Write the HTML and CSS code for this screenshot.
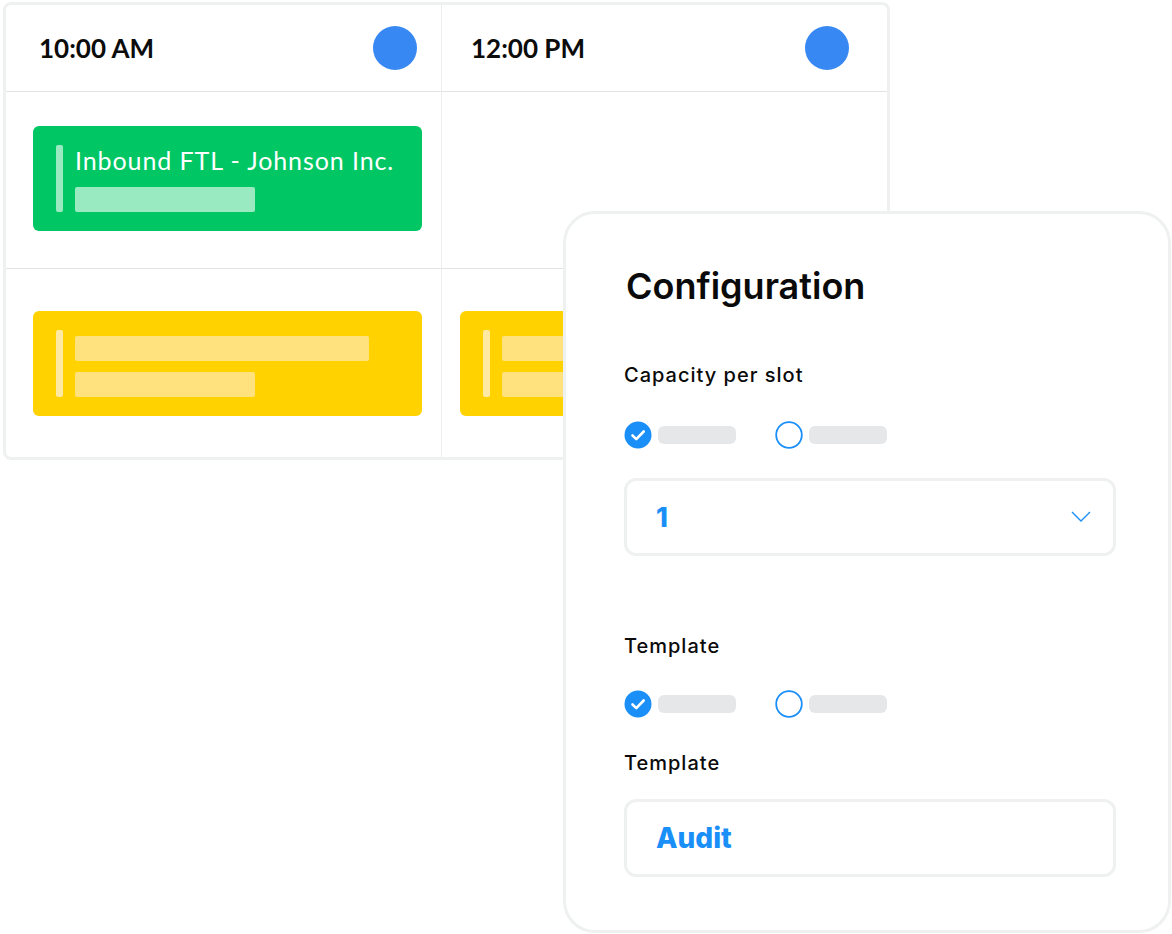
FILE: index.html
```html
<!DOCTYPE html>
<html>
<head>
<meta charset="utf-8">
<link rel="stylesheet" href="styles.css">
</head>
<body>
<div class="stage">
  <div class="calendar">
    <div class="col col-left">
      <div class="head"><span class="time">10:00 AM</span><span class="dot"></span></div>
      <div class="cell row1">
        <div class="event green">
          <div class="ev-line"></div>
          <div class="ev-body">
            <div class="ev-title">Inbound FTL - Johnson Inc.</div>
            <div class="bar short"></div>
          </div>
        </div>
      </div>
      <div class="cell row2">
        <div class="event yellow">
          <div class="ev-line"></div>
          <div class="ev-body">
            <div class="bar long"></div>
            <div class="bar short"></div>
          </div>
        </div>
      </div>
    </div>
    <div class="col col-right">
      <div class="head"><span class="time">12:00 PM</span><span class="dot"></span></div>
      <div class="cell row1"></div>
      <div class="cell row2">
        <div class="event yellow">
          <div class="ev-line"></div>
          <div class="ev-body">
            <div class="bar long"></div>
            <div class="bar short"></div>
          </div>
        </div>
      </div>
    </div>
  </div>

  <div class="config">
    <h1 class="title">Configuration</h1>
    <div class="label cap">Capacity per slot</div>
    <div class="radios r1">
      <div class="radio"><span class="check"><svg viewBox="0 0 28 28" width="28" height="28"><circle cx="14" cy="14" r="13.5" fill="#1a8ff7"/><path d="M8.5 14.5l3.8 3.6 7.4-7.6" fill="none" stroke="#fff" stroke-width="2.6" stroke-linecap="round" stroke-linejoin="round"/></svg></span><span class="pill"></span></div>
      <div class="radio"><span class="check"><svg viewBox="0 0 28 28" width="28" height="28"><circle cx="14" cy="14" r="12.8" fill="#fff" stroke="#1a8ff7" stroke-width="1.8"/></svg></span><span class="pill"></span></div>
    </div>
    <div class="field select">
      <span class="value">1</span>
      <svg class="chev" viewBox="0 0 20 12" width="20" height="12"><path d="M1 1l9 9 9-9" fill="none" stroke="#1a8ff7" stroke-width="1.4"/></svg>
    </div>
    <div class="label tpl1">Template</div>
    <div class="radios r2">
      <div class="radio"><span class="check"><svg viewBox="0 0 28 28" width="28" height="28"><circle cx="14" cy="14" r="13.5" fill="#1a8ff7"/><path d="M8.5 14.5l3.8 3.6 7.4-7.6" fill="none" stroke="#fff" stroke-width="2.6" stroke-linecap="round" stroke-linejoin="round"/></svg></span><span class="pill"></span></div>
      <div class="radio"><span class="check"><svg viewBox="0 0 28 28" width="28" height="28"><circle cx="14" cy="14" r="12.8" fill="#fff" stroke="#1a8ff7" stroke-width="1.8"/></svg></span><span class="pill"></span></div>
    </div>
    <div class="label tpl2">Template</div>
    <div class="field text">
      <span class="value audit">Audit</span>
    </div>
  </div>
</div>
</body>
</html>
```

FILE: styles.css
```css
* { box-sizing: border-box; }
html, body { margin: 0; padding: 0; background: #fff; }
body { font-family: "Lato", "Open Sans", sans-serif; width: 1172px; height: 934px; overflow: hidden; }
.stage { position: relative; width: 1172px; height: 934px; padding: 2px 0 0 3px; }

.calendar {
  width: 887px;
  height: 458px;
  border: 3px solid #eff1f1;
  border-radius: 8px;
  display: flex;
  overflow: hidden;
  background: #fff;
}
.col { display: flex; flex-direction: column; }
.col-left { width: 436px; border-right: 1px solid #eceeee; }
.col-right { flex: 1; }
.head {
  height: 87px;
  border-bottom: 1px solid #e2e3e3;
  display: flex;
  align-items: center;
  justify-content: space-between;
}
.col-left .head { padding: 0 24px 0 33px; }
.col-right .head { padding: 0 38px 0 29px; }
.time { font-size: 26px; font-weight: 700; color: #0c0c0c; }
.dot { width: 44px; height: 44px; border-radius: 50%; background: #3888f3; }

.cell { display: flex; align-items: flex-start; }
.row1 { height: 177px; border-bottom: 1px solid #e2e3e3; padding-top: 34px; }
.row2 { flex: 1; padding-top: 42px; }
.col-left .cell { padding-left: 27px; }
.col-right .cell { padding-left: 18px; }

.event {
  width: 389px;
  height: 105px;
  border-radius: 6px;
  display: flex;
  padding: 19px 0 0 23px;
  gap: 12px;
  flex-shrink: 0;
}
.green { background: #00c764; }
.yellow { background: #ffd200; }
.ev-line { width: 7px; height: 67px; border-radius: 2px; }
.green .ev-line { background: #9aeac1; }
.yellow .ev-line { background: #ffe9a3; }
.ev-body { display: flex; flex-direction: column; }
.ev-title { color: #fff; font-size: 25px; line-height: 30px; height: 42px; letter-spacing: 0.9px; white-space: nowrap; }
.bar { height: 25px; border-radius: 2px; }
.green .bar { background: #9aeac1; }
.yellow .bar { background: #ffe17d; }
.yellow .ev-body { padding-top: 6px; gap: 11px; }
.bar.long { width: 294px; }
.bar.short { width: 180px; }

.config {
  position: absolute;
  left: 563px;
  top: 211px;
  width: 608px;
  height: 722px;
  background: #fff;
  border: 3px solid #eff1f1;
  border-radius: 32px;
  padding: 50px 55px 0 58px;
  font-family: "Inter", "Open Sans", sans-serif;
}
.title { margin: 0 0 0 2px; font-size: 36px; font-weight: 600; color: #0a0a0a; line-height: 44px; }
.label { font-size: 20px; font-weight: 500; color: #0a0a0a; line-height: 24px; letter-spacing: 1px; }
.label.cap { margin-top: 55px; }
.radios { display: flex; gap: 39px; height: 28px; }
.radios.r1 { margin-top: 34px; }
.radios.r2 { margin-top: 32px; }
.radio { display: flex; align-items: center; gap: 6px; }
.check { width: 28px; height: 28px; display: block; }
.check svg { display: block; }
.pill { width: 78px; height: 18px; border-radius: 6px; background: #e6e7e9; }
.field {
  width: 492px;
  height: 78px;
  border: 3px solid #eff1f1;
  border-radius: 12px;
  display: flex;
  align-items: center;
  justify-content: space-between;
  padding: 0 22px 0 29px;
}
.select { margin-top: 29px; }
.value { color: #1a8ff7; font-weight: 800; font-size: 27px; }
.audit { font-size: 28px; }
.label.tpl1 { margin-top: 78px; }
.label.tpl2 { margin-top: 33px; }
.text { margin-top: 24px; }
.chev { display: block; }
```
